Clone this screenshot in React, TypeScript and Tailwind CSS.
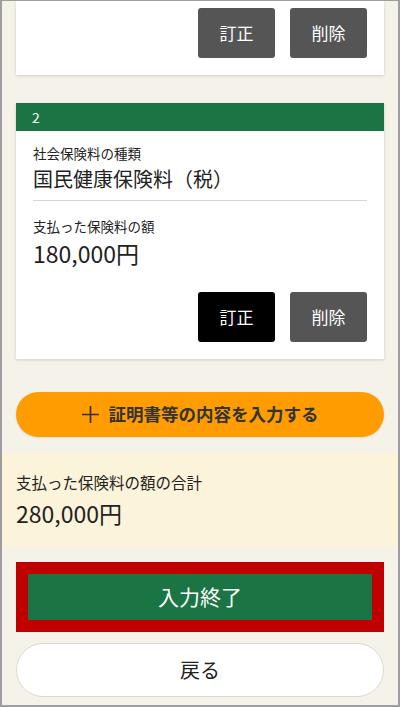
import React from "react";

const font = { fontFamily: '"Noto Sans CJK JP", "Noto Sans", sans-serif' };

type Entry = { no: number; kind: string; amount: string };

const entries: Entry[] = [{ no: 2, kind: "国民健康保険料（税）", amount: "180,000円" }];

const RowButtons = ({ active }: { active?: boolean }) => (
  <div className="flex justify-end gap-[15px]">
    <button
      className={`w-[77px] h-[50px] rounded-[3px] text-white text-[17px] ${
        active ? "bg-black" : "bg-[#555555]"
      }`}
    >
      訂正
    </button>
    <button className="w-[77px] h-[50px] rounded-[3px] bg-[#555555] text-white text-[17px]">
      削除
    </button>
  </div>
);

const App = () => {
  return (
    <div
      style={font}
      className="w-[400px] h-[707px] overflow-hidden bg-[#f5f2ea] border-2 border-t border-[#9d9d9d] text-[#222222]"
    >
      <div className="px-[14px]">
        {/* previous entry, scrolled mostly out of view */}
        <div className="bg-white pt-[7px] pb-[17px] pr-[17px] shadow-[0_1px_3px_rgba(0,0,0,0.15)]">
          <RowButtons />
        </div>

        {entries.map((item) => (
          <div
            key={item.no}
            className="mt-[28px] bg-white shadow-[0_1px_3px_rgba(0,0,0,0.15)]"
          >
            <div className="h-[28px] bg-[#1b7444] px-[16px] flex items-center text-white text-[14px]">
              {item.no}
            </div>
            <div className="px-[17px] pt-[13px] pb-[17px]">
              <div className="border-b border-[#d6d6d6] pb-[7px]">
                <p className="text-[13.5px] leading-[18px]">社会保険料の種類</p>
                <p className="mt-[3px] text-[20px] leading-[28px]">{item.kind}</p>
              </div>
              <p className="mt-[16px] text-[13.5px] leading-[18px]">支払った保険料の額</p>
              <p className="mt-[3px] text-[23px] leading-[30px]">{item.amount}</p>
              <div className="mt-[24px]">
                <RowButtons active />
              </div>
            </div>
          </div>
        ))}

        <button className="mt-[33px] w-full h-[45px] rounded-full bg-[#ff9d00] flex items-center justify-center gap-[10px] text-[#333333] text-[17.5px] font-bold shadow-[0_1px_2px_rgba(0,0,0,0.1)]">
          <svg width="17" height="17" viewBox="0 0 17 17">
            <path d="M8.5 0v17M0 8.5h17" stroke="#333333" strokeWidth="1.7" />
          </svg>
          証明書等の内容を入力する
        </button>
      </div>

      {/* total */}
      <div className="mt-[16px] bg-[#fbf3da] px-[14px] pt-[18px] pb-[19px]">
        <p className="text-[15.5px] leading-[22px]">支払った保険料の額の合計</p>
        <p className="mt-[5px] text-[23px] leading-[30px]">280,000円</p>
      </div>

      <div className="px-[14px]">
        <div className="mt-[15px] bg-[#c00000] p-[12px]">
          <button className="w-full h-[46px] bg-[#1b7444] text-white text-[21px]">
            入力終了
          </button>
        </div>
        <button className="mt-[11px] w-full h-[54px] rounded-full bg-white border border-[#dcd8cf] text-[20px] text-[#222222]">
          戻る
        </button>
      </div>
    </div>
  );
};

export default App;
